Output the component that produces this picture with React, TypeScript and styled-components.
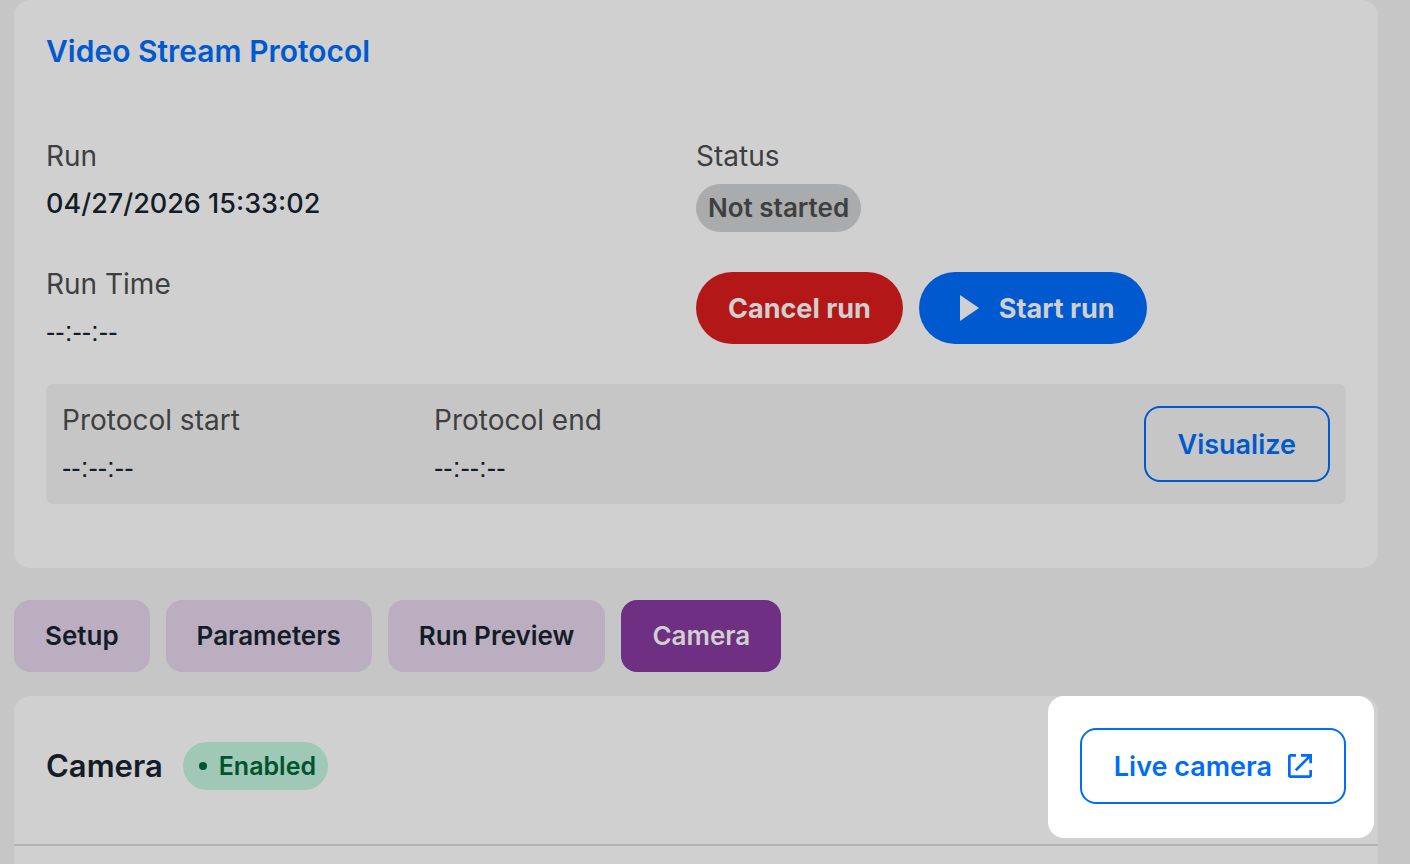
import React from "react";
import styled, { createGlobalStyle } from "styled-components";

const color = {
  page: "#c6c6c6",
  card: "#d0d0d0",
  blue: "#0059cf",
  brightBlue: "#006cfa",
  red: "#b41717",
  purple: "#6f3083",
  lilac: "#baaec0",
  ink: "#131c27",
  grey: "#3e3f40",
};

const GlobalStyle = createGlobalStyle`
  * { box-sizing: border-box; }
  body {
    margin: 0;
    background: ${color.page};
    color: ${color.ink};
    font-family: Inter, "Liberation Sans", sans-serif;
    font-size: 28px;
    line-height: 40px;
  }
  h1, h2, p, dl, dd { margin: 0; }
  button { font-family: inherit; cursor: pointer; }
`;

const Page = styled.main`
  height: 100vh;
  overflow: hidden;
  padding: 0 32px 0 14px;
`;

const RunCard = styled.section`
  padding: 32px 32px 64px;
  border-radius: 16px;
  background: ${color.card};
`;

const ProtocolLink = styled.a`
  color: ${color.blue};
  text-decoration: none;
`;

const ProtocolTitle = styled.h1`
  margin-bottom: 66px;
  font-size: 30px;
  font-weight: 600;
  line-height: 38px;
`;

const Details = styled.div`
  display: grid;
  grid-template-columns: 1fr 1fr;
  row-gap: 32px;
  margin-bottom: 32px;
`;

const Field = styled.dl`
  display: flex;
  flex-direction: column;
  align-items: flex-start;
  gap: 8px;
`;

const Label = styled.dt`
  color: ${color.grey};
`;

const Value = styled.dd`
  font-size: 27px;
  font-weight: 500;
  white-space: nowrap;
`;

const EmptyTime = styled.dd`
  font-family: "Liberation Sans", Arial, sans-serif;
  white-space: nowrap;
`;

const Badge = styled.span<{ $tone: "neutral" | "success" }>`
  display: flex;
  align-items: center;
  gap: 12px;
  height: 48px;
  padding: 0 ${(p) => (p.$tone === "success" ? "12px 0 16px" : "12px")};
  border-radius: 24px;
  background: ${(p) => (p.$tone === "success" ? "#9fc8b6" : "#a9abad")};
  color: ${(p) => (p.$tone === "success" ? "#00542f" : color.grey)};
  font-size: ${(p) => (p.$tone === "success" ? "25px" : "26px")};
  font-weight: 600;
  white-space: nowrap;
`;

const Dot = styled.i`
  width: 8px;
  height: 8px;
  border-radius: 50%;
  background: currentColor;
`;

const Actions = styled.div`
  display: flex;
  align-items: center;
  gap: 16px;
`;

const PillButton = styled.button<{ $bg: string }>`
  display: flex;
  align-items: center;
  gap: 12px;
  height: 72px;
  padding: 0 32px;
  border: 0;
  border-radius: 36px;
  background: ${(p) => p.$bg};
  color: ${color.card};
  font-size: 27px;
  font-weight: 700;
  white-space: nowrap;
`;

const OutlineButton = styled.button<{ $color: string }>`
  display: flex;
  align-items: center;
  gap: 16px;
  height: 76px;
  padding: 0 32px;
  border: 2px solid ${(p) => p.$color};
  border-radius: 16px;
  background: transparent;
  color: ${(p) => p.$color};
  font-size: 27px;
  font-weight: 600;
  white-space: nowrap;
`;

const Timing = styled.div`
  display: grid;
  grid-template-columns: minmax(0, 356px) minmax(0, 356px) 1fr;
  column-gap: 16px;
  align-items: center;
  padding: 16px;
  border-radius: 8px;
  background: ${color.page};

  ${OutlineButton} { justify-self: end; }
`;

const Tabs = styled.nav`
  display: flex;
  gap: 16px;
  margin: 32px 0 24px;
`;

const Tab = styled.button<{ $active?: boolean }>`
  height: 72px;
  padding: 0 31px 2px;
  border: 0;
  border-radius: 16px;
  background: ${(p) => (p.$active ? color.purple : color.lilac)};
  color: ${(p) => (p.$active ? color.card : color.ink)};
  font-size: 26px;
  font-weight: 600;
  white-space: nowrap;
`;

const CameraCard = styled.section`
  min-height: 320px;
  border-radius: 16px;
  background: ${color.card};
`;

const CameraHeader = styled.header`
  display: flex;
  justify-content: space-between;
  align-items: flex-start;
  padding: 0 4px 6px 32px;
  border-bottom: 2px solid #b3b3b3;
`;

const CameraHeading = styled.div`
  display: flex;
  align-items: center;
  gap: 20px;
  padding-top: 46px;
`;

const CameraTitle = styled.h2`
  font-size: 31px;
  font-weight: 600;
`;

const Spotlight = styled.div`
  padding: 32px 28px 34px 32px;
  border-radius: 16px;
  background: #fff;
`;

const PlayIcon = () => (
  <svg width="36" height="36" viewBox="0 0 36 36" fill="currentColor" aria-hidden="true">
    <path d="M9 5v26l19-13z" />
  </svg>
);

const OpenIcon = () => (
  <svg width="24" height="24" viewBox="0 0 24 24" fill="currentColor" aria-hidden="true">
    <path d="M2.700 24A2.700 2.700 0 0 1 0 21.300V2.700A2.700 2.700 0 0 1 2.700 0H8v2.700H2.700v18.600h18.600V16H24v5.300A2.700 2.700 0 0 1 21.300 24z" />
    <path d="M13 0h11v9.300h-2.700V4.600L8.700 17.200 6.800 15.300 19.400 2.700H13z" />
  </svg>
);

const EMPTY_TIME = "--:--:--";
const tabs = ["Setup", "Parameters", "Run Preview", "Camera"];

export default function App() {
  return (
    <>
      <GlobalStyle />
      <Page>
        <RunCard>
          <ProtocolTitle>
            <ProtocolLink href="#protocol">Video Stream Protocol</ProtocolLink>
          </ProtocolTitle>
          <Details>
            <Field>
              <Label>Run</Label>
              <Value>04/27/2026 15:33:02</Value>
            </Field>
            <Field>
              <Label>Status</Label>
              <dd>
                <Badge $tone="neutral">Not started</Badge>
              </dd>
            </Field>
            <Field>
              <Label>Run Time</Label>
              <EmptyTime>{EMPTY_TIME}</EmptyTime>
            </Field>
            <Actions>
              <PillButton $bg={color.red}>Cancel run</PillButton>
              <PillButton $bg={color.blue}>
                <PlayIcon />
                Start run
              </PillButton>
            </Actions>
          </Details>
          <Timing>
            <Field>
              <Label>Protocol start</Label>
              <EmptyTime>{EMPTY_TIME}</EmptyTime>
            </Field>
            <Field>
              <Label>Protocol end</Label>
              <EmptyTime>{EMPTY_TIME}</EmptyTime>
            </Field>
            <OutlineButton $color={color.blue}>Visualize</OutlineButton>
          </Timing>
        </RunCard>
        <Tabs>
          {tabs.map((name) => (
            <Tab key={name} $active={name === "Camera"}>
              {name}
            </Tab>
          ))}
        </Tabs>
        <CameraCard>
          <CameraHeader>
            <CameraHeading>
              <CameraTitle>Camera</CameraTitle>
              <Badge $tone="success">
                <Dot />
                Enabled
              </Badge>
            </CameraHeading>
            <Spotlight>
              <OutlineButton $color={color.brightBlue}>
                Live camera
                <OpenIcon />
              </OutlineButton>
            </Spotlight>
          </CameraHeader>
        </CameraCard>
      </Page>
    </>
  );
}
